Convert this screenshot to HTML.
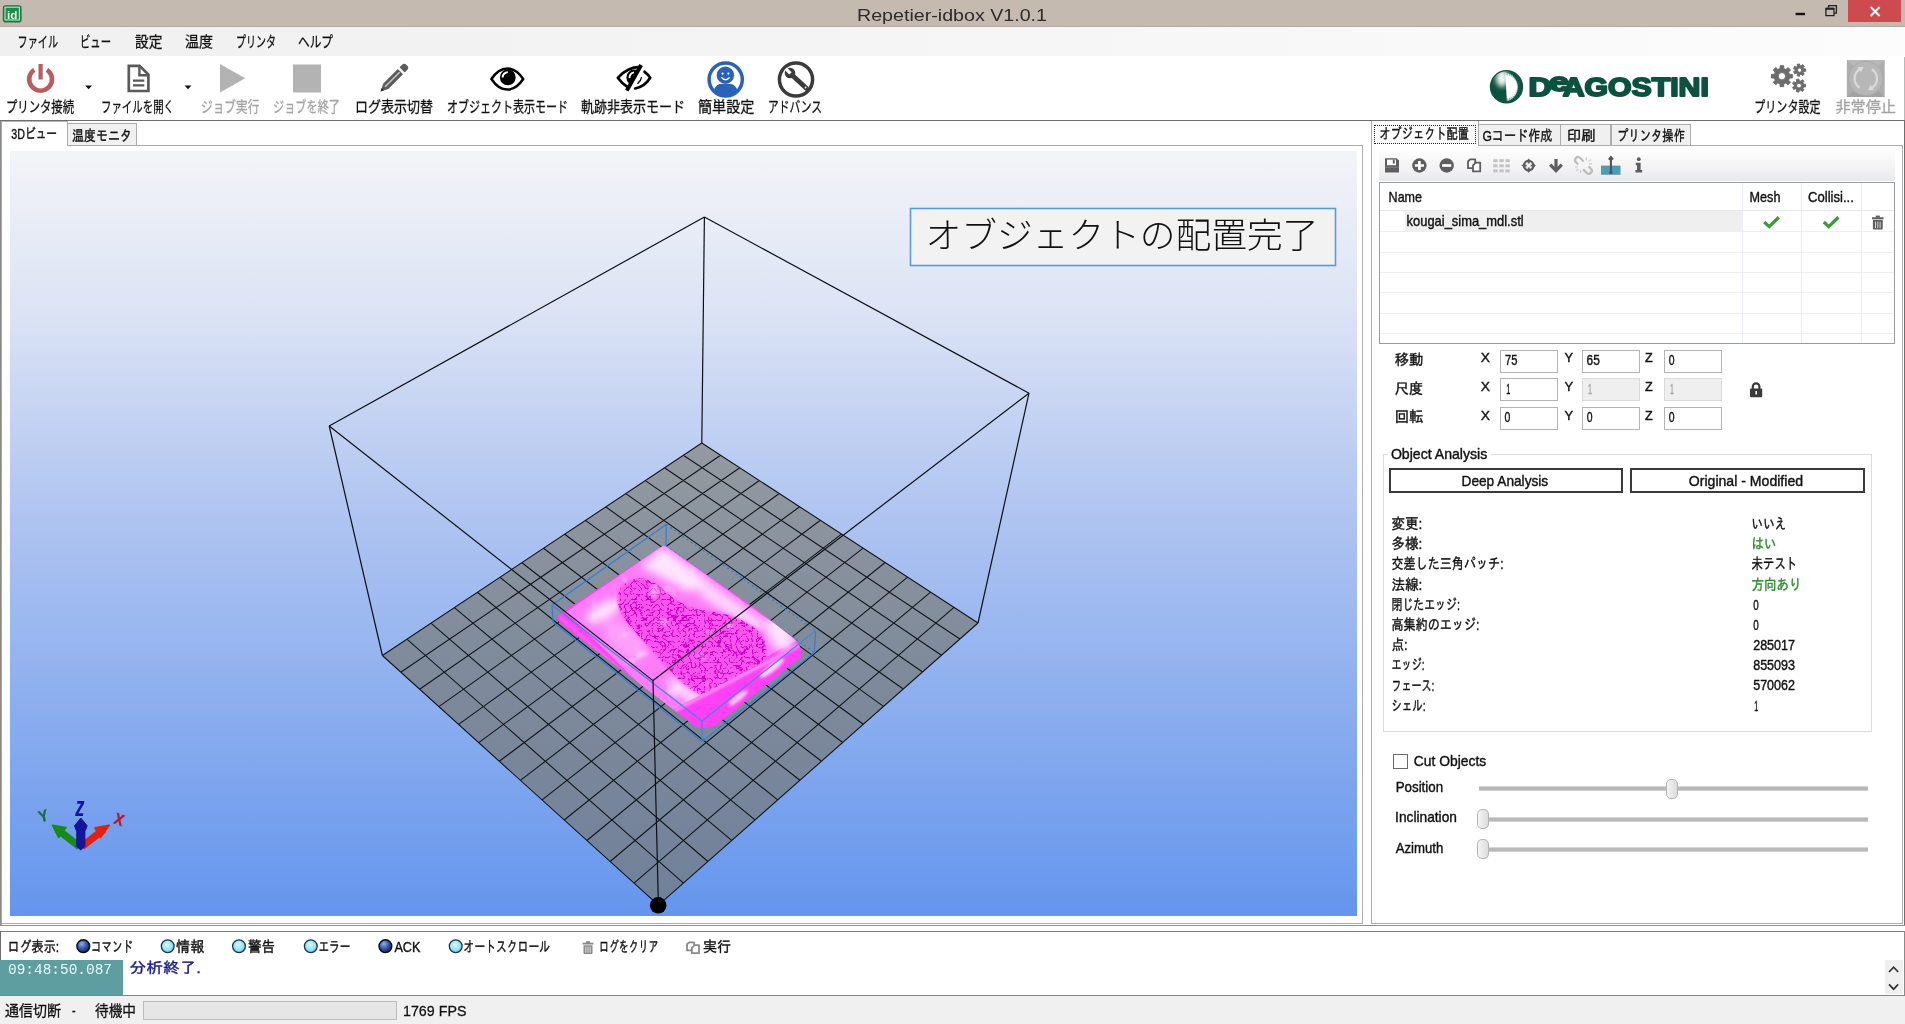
<!DOCTYPE html>
<html lang="ja"><head><meta charset="utf-8"><title>Repetier-idbox V1.0.1</title>
<style>
html,body{margin:0;padding:0;background:#fff;}
body{width:1905px;height:1024px;overflow:hidden;font-family:"Liberation Sans","IPAGothic","Noto Sans CJK JP",sans-serif;}
#app{position:relative;width:1905px;height:1024px;overflow:hidden;background:#fff;}
#app div{position:absolute;box-sizing:border-box;}
#ov{position:absolute;left:0;top:0;}
#titlebar{left:0;top:0;width:1905px;height:27px;background:#c5bab0;}
#closebtn{left:1848px;top:0;width:53px;height:22px;background:#cd4b4f;}
#menubar{left:0;top:27px;width:1905px;height:29px;background:linear-gradient(to right,#f0f0f0 0%,#f4f4f4 40%,#fcfcfc 100%);}
#toolbar{left:0;top:56px;width:1905px;height:64px;background:#fff;}
.hl{height:1px;}
.vl{width:1px;}
#view3d{left:10px;top:151px;width:1347px;height:765px;background:linear-gradient(to bottom,#f3f4f8 0%,#dde4f5 20%,#b3c7f1 45%,#6495ed 100%);}
.tab{background:#f0f0f0;border:1px solid #acacac;}
.tabsel{background:#fff;border:1px solid #acacac;border-bottom:none;}
.inp{width:58px;height:23px;background:#fff;border:1px solid #b3b4b8;}
.inp.dis{background:#efefef;border-color:#d9d9d9;}
.btn{height:25px;background:#fff;border:2px solid #3a3a3a;}
.track{height:5px;background:#b9b9b9;border-top:1px solid #d6d6d6;border-bottom:1px solid #d0d0d0;}
.thumb{width:12px;height:20px;border-radius:5px;background:linear-gradient(to right,#f4f4f4,#dcdcdc);border:1px solid #b4b4b4;}

</style></head>
<body>
<div id="app">
<div id="titlebar"></div>
<div id="closebtn"></div>
<div id="menubar"></div>
<div class="hl" style="left:0;top:26px;width:1905px;background:#b3aaa1;"></div>
<div id="toolbar"></div>
<div class="hl" style="left:0;top:120px;width:1905px;background:#6e6e6e;"></div>
<div class="vl" style="left:1904px;top:120px;height:806px;background:#6e6e6e;"></div>
<div class="vl" style="left:1904px;top:57px;height:63px;background:#b8b8b8;"></div>
<!-- left tab control -->
<div class="vl" style="left:0;top:121px;height:804px;background:#8a8a8a;"></div>
<div class="vl" style="left:1px;top:121px;height:804px;background:#a8a8a8;"></div>
<div class="hl" style="left:67px;top:145px;width:1296px;background:#acacac;"></div>
<div class="vl" style="left:1362px;top:145px;height:779px;background:#acacac;"></div>
<div class="hl" style="left:1px;top:923px;width:1362px;background:#acacac;"></div>
<div class="tabsel" style="left:2px;top:121px;width:66px;height:25px;border-left:none;border-top:none;"></div>
<div class="tab" style="left:67px;top:123px;width:70px;height:23px;"></div>
<div class="hl" style="left:2px;top:121px;width:65px;background:#b4b4b4;"></div>
<div id="view3d"></div>
<!-- right tab control -->
<div class="vl" style="left:1371px;top:121px;height:803px;background:#acacac;"></div>
<div class="hl" style="left:1478px;top:145px;width:425px;background:#acacac;"></div>
<div class="vl" style="left:1902px;top:145px;height:779px;background:#acacac;"></div>
<div class="hl" style="left:1371px;top:923px;width:532px;background:#acacac;"></div>
<div class="tabsel" style="left:1371px;top:121px;width:108px;height:25px;border-top:none;"></div>
<div class="tab" style="left:1478px;top:124px;width:83px;height:22px;"></div>
<div class="tab" style="left:1560px;top:124px;width:51px;height:22px;"></div>
<div class="tab" style="left:1611px;top:124px;width:80px;height:22px;"></div>
<div style="left:1374px;top:125px;width:102px;height:19px;border:1px dotted #222;"></div>
<!-- object toolbar -->
<div style="left:1379px;top:149px;width:516px;height:32px;background:linear-gradient(to bottom,#ffffff 0%,#f8f8f8 30%,#f1f1f2 70%,#e7e8ec 100%);"></div>
<!-- list view -->
<div style="left:1379px;top:182px;width:516px;height:162px;background:#fff;border:1px solid #9a9da2;"></div>
<div style="left:1405px;top:211px;width:337px;height:20px;background:#efefef;"></div>
<div class="hl" style="left:1380px;top:210px;width:514px;background:#e8e8e8;"></div>
<div class="hl" style="left:1380px;top:231px;width:514px;background:#efefef;"></div>
<div class="hl" style="left:1380px;top:252px;width:514px;background:#efefef;"></div>
<div class="hl" style="left:1380px;top:272px;width:514px;background:#efefef;"></div>
<div class="hl" style="left:1380px;top:292px;width:514px;background:#efefef;"></div>
<div class="hl" style="left:1380px;top:313px;width:514px;background:#efefef;"></div>
<div class="hl" style="left:1380px;top:333px;width:514px;background:#efefef;"></div>
<div class="vl" style="left:1742px;top:183px;height:160px;background:#e9edf2;"></div>
<div class="vl" style="left:1801px;top:183px;height:160px;background:#e9edf2;"></div>
<div class="vl" style="left:1861px;top:183px;height:160px;background:#e9edf2;"></div>
<!-- inputs -->
<div class="inp" style="left:1500px;top:350px;"></div>
<div class="inp" style="left:1582px;top:350px;"></div>
<div class="inp" style="left:1664px;top:350px;"></div>
<div class="inp" style="left:1500px;top:378px;"></div>
<div class="inp dis" style="left:1582px;top:378px;"></div>
<div class="inp dis" style="left:1664px;top:378px;"></div>
<div class="inp" style="left:1500px;top:407px;"></div>
<div class="inp" style="left:1582px;top:407px;"></div>
<div class="inp" style="left:1664px;top:407px;"></div>
<!-- group box -->
<div style="left:1383px;top:454px;width:489px;height:278px;border:1px solid #dcdcdc;"></div>
<div style="left:1388px;top:446px;width:103px;height:18px;background:#fff;"></div>
<div class="btn" style="left:1389px;top:468px;width:234px;"></div>
<div class="btn" style="left:1630px;top:468px;width:235px;"></div>
<!-- cut objects -->
<div style="left:1393px;top:754px;width:15px;height:15px;border:1px solid #6a6a6a;background:#fff;"></div>
<div class="track" style="left:1479px;top:786px;width:389px;"></div>
<div class="track" style="left:1479px;top:817px;width:389px;"></div>
<div class="track" style="left:1479px;top:847px;width:389px;"></div>
<div class="thumb" style="left:1666px;top:779px;"></div>
<div class="thumb" style="left:1477px;top:809px;"></div>
<div class="thumb" style="left:1477px;top:839px;"></div>
<!-- splitter + log -->
<div class="hl" style="left:0;top:925px;width:1905px;background:#8e8e8e;"></div>
<div class="hl" style="left:0;top:931px;width:1905px;background:#7c7c7c;"></div>
<div class="vl" style="left:0;top:931px;height:65px;background:#6e6e6e;"></div>
<div class="vl" style="left:1904px;top:931px;height:65px;background:#8a8a8a;"></div>
<div style="left:0;top:960px;width:123px;height:36px;background:#5f9ea0;"></div>
<div style="left:1885px;top:960px;width:18px;height:34px;background:#f0f0f0;"></div>
<div class="hl" style="left:0;top:995px;width:1905px;background:#858585;"></div>
<div style="left:0;top:996px;width:1905px;height:28px;background:#f0f0f0;"></div>
<div style="left:143px;top:1001px;width:254px;height:19px;background:#e6e6e6;border:1px solid #bcbcbc;"></div>

<svg id="ov" width="1905" height="1024" viewBox="0 0 1905 1024">
<defs>
<linearGradient id="pinkg" x1="0" y1="0" x2="1" y2="1"><stop offset="0" stop-color="#ffb8fb"/><stop offset="0.35" stop-color="#ff70f8"/><stop offset="0.7" stop-color="#f33cf0"/><stop offset="1" stop-color="#ff5cf8"/></linearGradient>
<filter id="tex" x="0" y="0" width="1" height="1"><feTurbulence type="turbulence" baseFrequency="0.19" numOctaves="2" seed="11" result="n"/><feColorMatrix in="n" type="matrix" values="0 0 0 0 0.60  0 0 0 0 0.0  0 0 0 0 0.54  -9 0 0 0 1.75"/><feComposite in2="SourceGraphic" operator="in"/></filter><filter id="tex2" x="0" y="0" width="1" height="1"><feTurbulence type="fractalNoise" baseFrequency="0.06" numOctaves="2" seed="5" result="n"/><feColorMatrix in="n" type="matrix" values="0 0 0 0 1  0 0 0 0 0.9  0 0 0 0 1  0 6 0 0 -3.9"/><feGaussianBlur stdDeviation="1.2"/><feComposite in2="SourceGraphic" operator="in"/></filter>
<filter id="blur2"><feGaussianBlur stdDeviation="4"/></filter>
<filter id="blur1"><feGaussianBlur stdDeviation="1.6"/></filter>
<clipPath id="objclip"><path d="M664,545 L752,606 L793,638 Q803,646 801,657 L716,725 Q704,731 695,726 L560,623 Q555,617 561,613 Z"/></clipPath>
</defs>
<g id="scene">
<linearGradient id="floorg" gradientUnits="userSpaceOnUse" x1="0" y1="443" x2="0" y2="905"><stop offset="0" stop-color="#939aa1"/><stop offset="0.45" stop-color="#808b9b"/><stop offset="1" stop-color="#71819a"/></linearGradient>
<polygon points="382.4,655.5 701.8,443.0 978.0,623.0 658.4,905.2" fill="url(#floorg)"/>
<path d="M382.4,655.5L658.4,905.2M406.9,639.2L683.5,883.1M430.9,623.2L707.9,861.5M454.4,607.6L731.7,840.4M477.4,592.3L755.0,819.9M499.9,577.3L777.7,799.9M522.0,562.7L799.9,780.3M543.6,548.3L821.5,761.2M564.7,534.2L842.7,742.5M585.5,520.4L863.3,724.3M605.8,506.9L883.5,706.4M625.8,493.6L903.3,689.0M645.3,480.6L922.6,672.0M664.5,467.8L941.4,655.3M683.3,455.3L959.9,639.0M701.8,443.0L978.0,623.0M382.4,655.5L701.8,443.0M400.8,672.2L720.6,455.3M419.6,689.2L739.8,467.8M438.9,706.6L759.4,480.5M458.6,724.4L779.3,493.5M478.7,742.6L799.6,506.8M499.3,761.3L820.4,520.3M520.4,780.4L841.5,534.1M542.1,799.9L863.1,548.1M564.2,820.0L885.2,562.5M586.9,840.5L907.6,577.1M610.1,861.5L930.6,592.1M634.0,883.1L954.0,607.4M658.4,905.2L978.0,623.0" stroke="#10161a" stroke-width="1.1" fill="none"/>
<g stroke="#0c1016" stroke-width="1.2" fill="none">
<line x1="704.4" y1="217.0" x2="701.8" y2="443.0" />
<line x1="329.2" y1="426.0" x2="382.4" y2="655.5" />
<line x1="1029.0" y1="393.2" x2="978.0" y2="623.0" />
<line x1="704.4" y1="217.0" x2="329.2" y2="426.0" />
<line x1="704.4" y1="217.0" x2="1029.0" y2="393.2" />
</g>
<g stroke="#2f7fd6" stroke-width="1.2" fill="none">
<line x1="666.2" y1="524.4" x2="815.6" y2="630.6" stroke-dasharray="2 3"/>
<line x1="666.0" y1="546.0" x2="814.4" y2="652.6" stroke-dasharray="2 3"/>
<line x1="666.0" y1="546.0" x2="553.0" y2="622.0" stroke-dasharray="2 3"/>
<line x1="666.2" y1="524.4" x2="666.0" y2="546.0" />
<line x1="552.0" y1="605.0" x2="666.2" y2="524.4" />
<line x1="552.0" y1="605.0" x2="553.0" y2="622.0" />
<line x1="815.6" y1="630.6" x2="814.4" y2="652.6" />
<line x1="553.0" y1="622.0" x2="702.0" y2="741.6" />
<line x1="702.0" y1="741.6" x2="814.4" y2="652.6" />
</g>
<g clip-path="url(#objclip)">
<rect x="550" y="540" width="260" height="195" fill="#ff44f4"/>
<path d="M664,545 L797,640 L668,712 L566,612 Z" fill="#ff7cf8"/>
<g filter="url(#blur2)">
<path d="M664,548 L712,584 L690,592 L640,566 Z" fill="#ffe4fe"/>
<path d="M700,576 L770,626 L752,630 L700,596 Z" fill="#ffd4fd"/>
<ellipse cx="604" cy="611" rx="20" ry="8" transform="rotate(-30 604 611)" fill="#ffe0fd"/>
<ellipse cx="780" cy="634" rx="12" ry="18" transform="rotate(-30 780 634)" fill="#ffe2fe"/>
<ellipse cx="688" cy="694" rx="26" ry="7" transform="rotate(38 688 694)" fill="#ffd0fc"/>
<ellipse cx="625" cy="640" rx="14" ry="26" transform="rotate(-48 625 640)" fill="#ff9ffa"/>
</g>
<g filter="url(#blur1)"><path d="M622,586 Q640,570 662,588 Q676,604 700,610 Q730,612 752,626 Q776,644 760,672 Q744,696 712,698 Q690,694 668,668 Q646,644 630,626 Q610,602 622,586 Z" fill="#f656ee"/></g>
<path filter="url(#tex)" d="M622,586 Q640,570 662,588 Q676,604 700,610 Q730,612 752,626 Q776,644 760,672 Q744,696 712,698 Q690,694 668,668 Q646,644 630,626 Q610,602 622,586 Z" fill="#c400b4"/>
<path filter="url(#tex2)" d="M566,612 L664,545 L797,640 L668,712Z" fill="#ffffff" opacity="0.45"/>
<path d="M557,615 L668,712 L699,730 L690,728 L556,624 Z" fill="#ff38f3"/>
<path d="M668,712 L801,643 L803,657 L712,729 L694,729 Z" fill="#ff40f4"/>
<g filter="url(#blur1)"><ellipse cx="772" cy="668" rx="15" ry="3.6" transform="rotate(-38 772 668)" fill="#ffd0fc"/><ellipse cx="738" cy="698" rx="12" ry="3.2" transform="rotate(-38 738 698)" fill="#ffc4fb"/><ellipse cx="610" cy="668" rx="16" ry="3" transform="rotate(40 610 668)" fill="#ff8cf8"/></g>
<path d="M670,713 L800,645" stroke="#ffc0fb" stroke-width="3" opacity="0.75" fill="none" filter="url(#blur1)"/>
<path d="M559,617 L668,712" stroke="#ff9cf9" stroke-width="2" opacity="0.6" fill="none" filter="url(#blur1)"/>
</g>
<g stroke="#3b88dc" stroke-width="1.2" fill="none">
<line x1="552.0" y1="605.0" x2="702.0" y2="721.0" />
<line x1="702.0" y1="721.0" x2="815.6" y2="630.6" />
<line x1="702.0" y1="721.0" x2="702.0" y2="741.6" />
</g>
<g stroke="#0c1016" stroke-width="1.2" fill="none">
<line x1="329.2" y1="426.0" x2="653.0" y2="680.6" />
<line x1="1029.0" y1="393.2" x2="653.0" y2="680.6" />
<line x1="653.0" y1="680.6" x2="658.4" y2="905.2" />
</g>
<circle cx="658.2" cy="905.3" r="8.3" fill="#000"/>
<g id="gizmo">
<path d="M79.6,846.6 L57.6,829.6" stroke="#178a17" stroke-width="7.4" fill="none"/>
<path d="M52.4,825.2 L66,827.6 L58.6,837.4 Z" fill="#178a17" stroke="#178a17" stroke-width="1.6" stroke-linejoin="round"/>
<path d="M81.8,846.6 L103.6,829.6" stroke="#e3220e" stroke-width="7.4" fill="none"/>
<path d="M109.2,825.2 L95,827.8 L100.4,837.6 Z" fill="#e3220e" stroke="#e3220e" stroke-width="1.6" stroke-linejoin="round"/>
<path d="M76.2,830 H85.4 V846.4 L80.7,850.4 L76.2,846.4Z" fill="#15159a"/>
<path d="M80.8,818 L87.2,825.8 L85.4,830.4 H76.2 L74.5,825.8 Z" fill="#15159a" stroke="#15159a" stroke-width="1" stroke-linejoin="round"/>
</g>
<rect x="910.5" y="208.5" width="425" height="57" fill="#f2f2f2" stroke="#5b9bd5" stroke-width="1.6"/>
</g>
<defs>
<radialGradient id="rOn" cx="0.38" cy="0.32" r="0.75"><stop offset="0" stop-color="#8fb0ea"/><stop offset="0.45" stop-color="#3c5fb4"/><stop offset="1" stop-color="#0c1a4c"/></radialGradient>
<radialGradient id="rOff" cx="0.45" cy="0.4" r="0.7"><stop offset="0" stop-color="#d8fbff"/><stop offset="0.6" stop-color="#8fe0fa"/><stop offset="1" stop-color="#5fb4dc"/></radialGradient>
<radialGradient id="sun" gradientUnits="userSpaceOnUse" cx="1505" cy="86.8" r="15.4"><stop offset="0" stop-color="#ffffff"/><stop offset="0.72" stop-color="#ffffff"/><stop offset="0.9" stop-color="#b9d8cc"/><stop offset="1" stop-color="#3a8069"/></radialGradient><filter id="lblur" x="-1" y="-1" width="3" height="3"><feGaussianBlur stdDeviation="2.6"/></filter>
<clipPath id="logoc"><circle cx="1506.5" cy="86.8" r="15.6"/></clipPath>
</defs>
<g id="icons">
<rect x="2.8" y="5.2" width="18.8" height="17.4" rx="2.8" fill="#1b7444"/>
<rect x="5" y="7.2" width="14.4" height="12.8" fill="#1f8a4c" stroke="#b8f0cc" stroke-width="1.1"/>
<rect x="1795.6" y="12.8" width="9.4" height="2.4" fill="#111"/>
<path d="M1828.6,7.6 V5.6 H1836.4 V13.2 H1834.4 M1825.9,8.4 H1834 V15.6 H1825.9Z" fill="none" stroke="#222" stroke-width="1.3"/><path d="M1825.9,8.8 H1834" stroke="#222" stroke-width="2"/>
<path d="M1870.6,7 L1879.6,16 M1879.6,7 L1870.6,16" stroke="#fff" stroke-width="2" fill="none"/>
<path d="M46.97,69.85 A11.4,11.4 0 1,1 34.23,69.85" fill="none" stroke="#b85c5e" stroke-width="4.6"/>
<line x1="40.6" y1="64" x2="40.6" y2="79.5" stroke="#b85c5e" stroke-width="4.2"/>
<path d="M85.2,85.6 H92 L88.6,89.2Z" fill="#111"/>
<path d="M184.6,85.6 H191.4 L188,89.2Z" fill="#111"/>
<path d="M128.8,65.9 H139.6 L148.4,74.6 V91 H128.8Z" fill="#fff" stroke="#5a5a5a" stroke-width="2.7" stroke-linejoin="miter"/>
<path d="M139.4,66 V75.2 H148.4" fill="none" stroke="#5a5a5a" stroke-width="2.4"/>
<path d="M133,80.6 H144.3 M133,85.4 H144.3" stroke="#5a5a5a" stroke-width="2.2" fill="none"/>
<path d="M220,64 L245.2,78.3 L220,92.6Z" fill="#b3b3b3"/>
<rect x="293" y="64.5" width="28" height="28" fill="#b3b3b3"/>
<g transform="translate(380.6,91.4) rotate(-45)" fill="#5c5c5c">
<path d="M0,0 L7.2,-3.7 H28 V3.7 H7.2Z"/>
<path d="M30.4,-3.7 H33.8 Q37,-3.7 37,-0.8 V0.8 Q37,3.7 33.8,3.7 H30.4Z"/>
<path d="M0,0 L3.2,-1.6 V1.6Z" fill="#2e2e2e"/>
<path d="M6.4,-0.9 H27 V0.7 H6.4Z" fill="#c4c4c4"/>
</g>
<path d="M491.4,79 C497,70.4 502,68.4 507.3,68.4 C512.6,68.4 517.6,70.4 523.2,79 C517.6,87.4 512.6,89.6 507.3,89.6 C502,89.6 497,87.4 491.4,79Z" fill="#fff" stroke="#000" stroke-width="2.5" stroke-linejoin="round"/>
<circle cx="507.8" cy="77.4" r="7.9" fill="#000"/>
<path d="M502.6,77.4 A5.2,5.2 0 0,1 507.8,72.2" stroke="#fff" stroke-width="2.1" fill="none"/>
<path d="M640.6,66.8 Q627.6,66.6 617.8,77.8 Q621.8,83.6 628,87.4" fill="none" stroke="#000" stroke-width="2.7" stroke-linejoin="round"/>
<clipPath id="esc"><polygon points="600,50 649.6,50 621.5,100 600,100"/></clipPath><circle cx="634.4" cy="77.4" r="8" fill="#000" clip-path="url(#esc)"/>
<path d="M629.6,78.2 A5,5 0 0,1 634,72.4" stroke="#fff" stroke-width="1.8" fill="none"/>
<path d="M641.2,65 L626.8,90.6" stroke="#000" stroke-width="3.9" fill="none"/>
<path d="M644.6,71.8 Q648.4,74.6 650.2,77.8 Q644.6,86.8 635.2,88.5" fill="none" stroke="#000" stroke-width="2.7" stroke-linecap="round"/>
<path d="M641.4,77.6 Q640.8,81 637.8,83.4" fill="none" stroke="#000" stroke-width="1.3" stroke-linecap="round"/>
<circle cx="725.7" cy="79.5" r="16.6" fill="#fff" stroke="#2a63b6" stroke-width="3.5"/>
<clipPath id="pc"><circle cx="725.7" cy="79.5" r="15.6"/></clipPath>
<g clip-path="url(#pc)" fill="#2a63b6"><circle cx="725.4" cy="75.2" r="8.7"/><path d="M712.6,99 Q712.6,86.2 719.5,84 H731.5 Q738.6,86.2 738.6,99Z"/></g>
<circle cx="722.6" cy="73.6" r="1.05" fill="#fff"/><circle cx="728.4" cy="73.6" r="1.05" fill="#fff"/>
<path d="M721.4,77.4 Q725.5,82 729.6,77.4" stroke="#fff" stroke-width="1.4" fill="none"/>
<circle cx="796" cy="79.5" r="16.6" fill="#fff" stroke="#3b3b3b" stroke-width="3.5"/>
<path d="M791.5,74.5 L806.6,88.4" stroke="#3b3b3b" stroke-width="4.8" stroke-linecap="round" fill="none"/>
<circle cx="790" cy="73" r="5.3" fill="#3b3b3b"/>
<path d="M790.4,73.4 L785.6,68.6" stroke="#fff" stroke-width="3.4" fill="none"/>
<circle cx="805.6" cy="87.5" r="0.9" fill="#fff"/>
<circle cx="1506.5" cy="86.8" r="16.7" fill="#0d5240"/>
<g clip-path="url(#logoc)">
<ellipse cx="1502" cy="78" rx="6" ry="9" fill="#ffffff" opacity="0.95" filter="url(#lblur)"/>
<path d="M1505.2,72.6 A14.6,14.6 0 0,1 1506.9,101.2 Z" fill="url(#sun)"/>
<path d="M1507.2,75.4L1507.6,71.7M1509.3,75.8L1510.3,72.2M1511.2,76.6L1512.9,73.3M1513.0,77.7L1515.3,74.7M1514.5,79.1L1517.3,76.6M1515.8,80.8L1519.0,78.9M1516.7,82.7L1520.2,81.4M1517.3,84.7L1520.9,84.0M1517.5,86.8L1521.2,86.8M1517.3,88.9L1520.9,89.6M1516.7,90.9L1520.2,92.2M1515.8,92.8L1519.0,94.7M1514.5,94.5L1517.3,97.0M1513.0,95.9L1515.3,98.9M1511.2,97.0L1512.9,100.3M1509.3,97.8L1510.3,101.4M1507.2,98.2L1507.6,101.9" stroke="#2f7a66" stroke-width="0.9" opacity="0.55" fill="none"/>
</g>
<path d="M1792.34,74.38 L1792.34,78.02 L1789.48,78.02 L1788.55,80.28 L1790.57,82.30 L1788.00,84.87 L1785.98,82.85 L1783.72,83.78 L1783.72,86.64 L1780.08,86.64 L1780.08,83.78 L1777.82,82.85 L1775.80,84.87 L1773.23,82.30 L1775.25,80.28 L1774.32,78.02 L1771.46,78.02 L1771.46,74.38 L1774.32,74.38 L1775.25,72.12 L1773.23,70.10 L1775.80,67.53 L1777.82,69.55 L1780.08,68.62 L1780.08,65.76 L1783.72,65.76 L1783.72,68.62 L1785.98,69.55 L1788.00,67.53 L1790.57,70.10 L1788.55,72.12 L1789.48,74.38Z M1778.20,76.20 a3.70,3.70 0 1,0 7.40,0 a3.70,3.70 0 1,0 -7.40,0Z" fill="#6c6c6c" fill-rule="evenodd" stroke="#6c6c6c" stroke-width="1" stroke-linejoin="round"/>
<path d="M1805.68,68.88 L1805.68,71.32 L1803.94,71.30 L1803.24,72.75 L1804.34,74.09 L1802.44,75.61 L1801.37,74.24 L1799.80,74.60 L1799.43,76.30 L1797.06,75.76 L1797.47,74.06 L1796.21,73.06 L1794.65,73.83 L1793.59,71.64 L1795.17,70.90 L1795.17,69.30 L1793.59,68.56 L1794.65,66.37 L1796.21,67.14 L1797.47,66.14 L1797.06,64.44 L1799.43,63.90 L1799.80,65.60 L1801.37,65.96 L1802.44,64.59 L1804.34,66.11 L1803.24,67.45 L1803.94,68.90Z M1797.40,70.10 a2.20,2.20 0 1,0 4.40,0 a2.20,2.20 0 1,0 -4.40,0Z" fill="#6c6c6c" fill-rule="evenodd" stroke="#6c6c6c" stroke-width="1" stroke-linejoin="round"/>
<path d="M1805.47,84.31 L1805.47,86.89 L1803.63,86.88 L1802.88,88.42 L1804.05,89.85 L1802.02,91.47 L1800.89,90.01 L1799.22,90.40 L1798.82,92.20 L1796.30,91.62 L1796.73,89.83 L1795.39,88.76 L1793.73,89.57 L1792.61,87.24 L1794.28,86.46 L1794.28,84.74 L1792.61,83.96 L1793.73,81.63 L1795.39,82.44 L1796.73,81.37 L1796.30,79.58 L1798.82,79.00 L1799.22,80.80 L1800.89,81.19 L1802.02,79.73 L1804.05,81.35 L1802.88,82.78 L1803.63,84.32Z M1796.60,85.60 a2.40,2.40 0 1,0 4.80,0 a2.40,2.40 0 1,0 -4.80,0Z" fill="#6c6c6c" fill-rule="evenodd" stroke="#6c6c6c" stroke-width="1" stroke-linejoin="round"/>
<rect x="1846.8" y="60" width="37.9" height="37" fill="#adadad"/>
<path d="M1846.8,60 H1884.7 L1876,68 H1855.5Z" fill="#b9b9b9"/><path d="M1846.8,97 H1884.7 L1876,89 H1855.5Z" fill="#a2a2a2"/>
<circle cx="1865.8" cy="78.5" r="17.2" fill="#b7b7b7" stroke="#a9a9a9" stroke-width="1"/>
<g transform="rotate(90 1865.8 78.5)">
<path d="M1856.6,72.4 A11,11 0 0,1 1875.6,73.2" fill="none" stroke="#dadada" stroke-width="2.2"/><path d="M1877.6,70.2 L1877.2,76.4 L1872,73.6Z" fill="#dadada"/>
<path d="M1875,84.6 A11,11 0 0,1 1856,83.8" fill="none" stroke="#dadada" stroke-width="2.2"/><path d="M1854,86.8 L1854.4,80.6 L1859.6,83.4Z" fill="#dadada"/>
</g>
<path d="M1385,158.3 H1396.6 L1399,160.6 V172.4 H1385Z" fill="#5e5e5e"/>
<rect x="1387" y="159.6" width="9" height="5.6" fill="#fff"/><rect x="1392.8" y="159.6" width="1.9" height="4" fill="#5e5e5e"/>
<path d="M1385,167.2 H1399" stroke="#8a8a8a" stroke-width="0.8"/>
<circle cx="1419.4" cy="165.5" r="7.2" fill="#5e5e5e"/><path d="M1414.8,165.5 H1424 M1419.4,160.9 V170.1" stroke="#fff" stroke-width="2.7"/>
<circle cx="1446.7" cy="165.5" r="7.2" fill="#5e5e5e"/><path d="M1442.1,165.5 H1451.3" stroke="#fff" stroke-width="2.7"/>
<g fill="#fff" stroke="#5e5e5e" stroke-width="1.8" stroke-linejoin="round"><path d="M1468.0,161.5 L1470.1,159.4 H1475.2 V168.2 H1468.0Z"/><path d="M1473.0,165.4 L1475.8,162.6 H1480.2 V171.4 H1473.0Z"/></g>
<rect x="1493.2" y="159.2" width="4.4" height="3" fill="#c2c2c2"/>
<rect x="1499.3" y="159.2" width="4.4" height="3" fill="#c2c2c2"/>
<rect x="1505.4" y="159.2" width="4.4" height="3" fill="#c2c2c2"/>
<rect x="1493.2" y="164.3" width="4.4" height="3" fill="#c2c2c2"/>
<rect x="1499.3" y="164.3" width="4.4" height="3" fill="#c2c2c2"/>
<rect x="1505.4" y="164.3" width="4.4" height="3" fill="#c2c2c2"/>
<rect x="1493.2" y="169.4" width="4.4" height="3" fill="#c2c2c2"/>
<rect x="1499.3" y="169.4" width="4.4" height="3" fill="#c2c2c2"/>
<rect x="1505.4" y="169.4" width="4.4" height="3" fill="#c2c2c2"/>
<circle cx="1528.7" cy="165.6" r="4.7" fill="none" stroke="#5e5e5e" stroke-width="2.3"/>
<path d="M1528.7,158.4 L1531.6,162 H1525.8Z M1528.7,172.8 L1531.6,169.2 H1525.8Z M1521.5,165.6 L1525.1,162.7 V168.5Z M1535.9,165.6 L1532.3,162.7 V168.5Z" fill="#5e5e5e"/>
<path d="M1528.7,160 V163.6 M1528.7,167.6 V171.2 M1523.1,165.6 H1526.7 M1530.7,165.6 H1534.3" stroke="#5e5e5e" stroke-width="1.9"/>
<path d="M1556,159 V169.6" fill="none" stroke="#5e5e5e" stroke-width="3.2"/><path d="M1550.2,164.6 L1556,170.6 L1561.8,164.6" fill="none" stroke="#5e5e5e" stroke-width="3.2"/>
<g fill="none" stroke="#bdbdbd" stroke-width="2.2" transform="translate(1583.4,165.4) rotate(45)"><path d="M-2.6,-3 H-7.4 Q-10.6,-3 -10.6,0 Q-10.6,3 -7.4,3 H-4.4"/><path d="M2.6,3 H7.4 Q10.6,3 10.6,0 Q10.6,-3 7.4,-3 H4.4"/></g>
<path d="M1586.6,157.4 L1586,160.4 M1590.8,159.6 L1588.4,161.6 M1592,163.6 L1589,163.8 M1580.2,173.2 L1580.8,170.2 M1576,171 L1578.4,169 M1574.8,167 L1577.8,166.8" fill="none" stroke="#cbcbcb" stroke-width="1.2"/>
<rect x="1601" y="165.6" width="19.5" height="9.2" fill="#4b9db3"/>
<path d="M1610.9,158.5 V172.6" stroke="#4f5558" stroke-width="2.1"/><path d="M1610.9,155.6 L1613.8,159 L1610.9,161 L1608,159Z" fill="#4f5558"/><circle cx="1610.9" cy="172.4" r="1.7" fill="#4f5558"/>
<circle cx="1638.8" cy="159.2" r="1.9" fill="#5e5e5e"/><path d="M1635.8,162.8 H1640.6 V170 H1642.2 V172.4 H1635.4 V170 H1637 V165.2 H1635.8Z" fill="#5e5e5e"/>
<path d="M1764.2,222.0 L1769.2,226.6 L1778.8,217.2" fill="none" stroke="#3d9a3a" stroke-width="3.3" stroke-linejoin="miter"/>
<path d="M1823.8,222.0 L1828.8,226.6 L1838.4,217.2" fill="none" stroke="#3d9a3a" stroke-width="3.3" stroke-linejoin="miter"/>
<g fill="#5c5c5c"><rect x="1875.7" y="215.6" width="4.2" height="2.0"/><rect x="1872.0" y="217.3" width="11.6" height="2.0"/><path d="M1872.9,220.1 H1882.7 V228.5 Q1882.7,229.6 1881.5,229.6 H1874.1 Q1872.9,229.6 1872.9,228.5Z"/></g><g stroke="#fff" stroke-width="1" opacity="0.75"><line x1="1875.5" y1="221.5" x2="1875.5" y2="228.2"/><line x1="1877.8" y1="221.5" x2="1877.8" y2="228.2"/><line x1="1880.1" y1="221.5" x2="1880.1" y2="228.2"/></g>
<path d="M1752.8,389 V386.6 A3.3,3.3 0 0,1 1759.4,386.6 V389" fill="none" stroke="#3a3a3a" stroke-width="2.2"/>
<rect x="1750" y="388.4" width="12.2" height="8.8" rx="1.2" fill="#3a3a3a"/><rect x="1755.4" y="391" width="1.6" height="3.4" fill="#fff"/>
<circle cx="83.3" cy="946.2" r="6.4" fill="url(#rOn)" stroke="#0a0a14" stroke-width="1.4"/>
<circle cx="167.7" cy="946.2" r="6.4" fill="url(#rOff)" stroke="#1c3a4a" stroke-width="1.3"/>
<circle cx="239" cy="946.2" r="6.4" fill="url(#rOff)" stroke="#1c3a4a" stroke-width="1.3"/>
<circle cx="310.8" cy="946.2" r="6.4" fill="url(#rOff)" stroke="#1c3a4a" stroke-width="1.3"/>
<circle cx="385.4" cy="946.2" r="6.4" fill="url(#rOn)" stroke="#0a0a14" stroke-width="1.4"/>
<circle cx="455.7" cy="946.2" r="6.4" fill="url(#rOff)" stroke="#1c3a4a" stroke-width="1.3"/>
<g fill="#8a8a8a"><rect x="586.1" y="941.2" width="3.9" height="1.8"/><rect x="582.6" y="942.7" width="10.8" height="1.8"/><path d="M583.5,945.3 H592.5 V953.0 Q592.5,954.0 591.5,954.0 H584.5 Q583.5,954.0 583.5,953.0Z"/></g><g stroke="#fff" stroke-width="1" opacity="0.75"><line x1="585.8" y1="946.6" x2="585.8" y2="952.7"/><line x1="588.0" y1="946.6" x2="588.0" y2="952.7"/><line x1="590.2" y1="946.6" x2="590.2" y2="952.7"/></g>
<g fill="#fff" stroke="#8a8a8a" stroke-width="1.8" stroke-linejoin="round"><path d="M687.0,944.2 L689.1,942.4 H694.1 V950.4 H687.0Z"/><path d="M691.9,947.8 L694.7,945.2 H699.0 V953.2 H691.9Z"/></g>
<path d="M1889,972 L1893.6,967.2 L1898.2,972 M1889,984.4 L1893.6,989.2 L1898.2,984.4" fill="none" stroke="#333" stroke-width="1.7"/>
</g>
<g id="texts">
<text x="857.0" y="20.8" font-size="17.4" font-family="&quot;Liberation Sans&quot;,&quot;Noto Sans CJK JP&quot;,sans-serif" fill="#2c2c2c" textLength="190.0" lengthAdjust="spacingAndGlyphs">Repetier-idbox V1.0.1</text>
<text x="7.0" y="18.8" font-size="11.5" font-family="&quot;Liberation Sans&quot;,&quot;Noto Sans CJK JP&quot;,sans-serif" fill="#d8ffe4" font-weight="700" textLength="10.4" lengthAdjust="spacingAndGlyphs">id</text>
<text x="17.6" y="46.6" font-size="15" font-family="&quot;Liberation Sans&quot;,&quot;Noto Sans CJK JP&quot;,sans-serif" fill="#111" textLength="40.4" lengthAdjust="spacingAndGlyphs" stroke="#111" stroke-width="0.28">ファイル</text>
<text x="80.0" y="46.6" font-size="15" font-family="&quot;Liberation Sans&quot;,&quot;Noto Sans CJK JP&quot;,sans-serif" fill="#111" textLength="31.0" lengthAdjust="spacingAndGlyphs" stroke="#111" stroke-width="0.28">ビュー</text>
<text x="135.0" y="46.6" font-size="15" font-family="&quot;Liberation Sans&quot;,&quot;Noto Sans CJK JP&quot;,sans-serif" fill="#111" textLength="27.4" lengthAdjust="spacingAndGlyphs" stroke="#111" stroke-width="0.28">設定</text>
<text x="185.0" y="46.6" font-size="15" font-family="&quot;Liberation Sans&quot;,&quot;Noto Sans CJK JP&quot;,sans-serif" fill="#111" textLength="28.0" lengthAdjust="spacingAndGlyphs" stroke="#111" stroke-width="0.28">温度</text>
<text x="236.0" y="46.6" font-size="15" font-family="&quot;Liberation Sans&quot;,&quot;Noto Sans CJK JP&quot;,sans-serif" fill="#111" textLength="40.0" lengthAdjust="spacingAndGlyphs" stroke="#111" stroke-width="0.28">プリンタ</text>
<text x="298.0" y="46.6" font-size="15" font-family="&quot;Liberation Sans&quot;,&quot;Noto Sans CJK JP&quot;,sans-serif" fill="#111" textLength="35.0" lengthAdjust="spacingAndGlyphs" stroke="#111" stroke-width="0.28">ヘルプ</text>
<text x="6.0" y="112.4" font-size="15" font-family="&quot;Liberation Sans&quot;,&quot;Noto Sans CJK JP&quot;,sans-serif" fill="#111" textLength="68.0" lengthAdjust="spacingAndGlyphs" stroke="#111" stroke-width="0.28">プリンタ接続</text>
<text x="101.0" y="112.4" font-size="15" font-family="&quot;Liberation Sans&quot;,&quot;Noto Sans CJK JP&quot;,sans-serif" fill="#111" textLength="73.0" lengthAdjust="spacingAndGlyphs" stroke="#111" stroke-width="0.28">ファイルを開く</text>
<text x="201.0" y="112.4" font-size="15" font-family="&quot;Liberation Sans&quot;,&quot;Noto Sans CJK JP&quot;,sans-serif" fill="#a3a3a3" textLength="58.4" lengthAdjust="spacingAndGlyphs" stroke="#a3a3a3" stroke-width="0.28">ジョブ実行</text>
<text x="273.0" y="112.4" font-size="15" font-family="&quot;Liberation Sans&quot;,&quot;Noto Sans CJK JP&quot;,sans-serif" fill="#a3a3a3" textLength="67.0" lengthAdjust="spacingAndGlyphs" stroke="#a3a3a3" stroke-width="0.28">ジョブを終了</text>
<text x="355.0" y="112.4" font-size="15" font-family="&quot;Liberation Sans&quot;,&quot;Noto Sans CJK JP&quot;,sans-serif" fill="#111" textLength="78.0" lengthAdjust="spacingAndGlyphs" stroke="#111" stroke-width="0.28">ログ表示切替</text>
<text x="447.0" y="112.4" font-size="15" font-family="&quot;Liberation Sans&quot;,&quot;Noto Sans CJK JP&quot;,sans-serif" fill="#111" textLength="121.0" lengthAdjust="spacingAndGlyphs" stroke="#111" stroke-width="0.28">オブジェクト表示モード</text>
<text x="581.0" y="112.4" font-size="15" font-family="&quot;Liberation Sans&quot;,&quot;Noto Sans CJK JP&quot;,sans-serif" fill="#111" textLength="104.0" lengthAdjust="spacingAndGlyphs" stroke="#111" stroke-width="0.28">軌跡非表示モード</text>
<text x="698.0" y="112.4" font-size="15" font-family="&quot;Liberation Sans&quot;,&quot;Noto Sans CJK JP&quot;,sans-serif" fill="#111" textLength="56.4" lengthAdjust="spacingAndGlyphs" stroke="#111" stroke-width="0.28">簡単設定</text>
<text x="768.0" y="112.4" font-size="15" font-family="&quot;Liberation Sans&quot;,&quot;Noto Sans CJK JP&quot;,sans-serif" fill="#111" textLength="54.0" lengthAdjust="spacingAndGlyphs" stroke="#111" stroke-width="0.28">アドバンス</text>
<text x="1754.3" y="112.4" font-size="15" font-family="&quot;Liberation Sans&quot;,&quot;Noto Sans CJK JP&quot;,sans-serif" fill="#111" textLength="66.2" lengthAdjust="spacingAndGlyphs" stroke="#111" stroke-width="0.28">プリンタ設定</text>
<text x="1835.4" y="112.4" font-size="15" font-family="&quot;Liberation Sans&quot;,&quot;Noto Sans CJK JP&quot;,sans-serif" fill="#a3a3a3" textLength="60.6" lengthAdjust="spacingAndGlyphs" stroke="#a3a3a3" stroke-width="0.28">非常停止</text>
<text x="1528.6" y="96.2" font-size="26" textLength="23" font-family="&quot;Liberation Sans&quot;,&quot;Noto Sans CJK JP&quot;,sans-serif" font-weight="700" fill="#0d5240" stroke="#0d5240" stroke-width="1.9" stroke-linejoin="round" lengthAdjust="spacingAndGlyphs">D</text>
<text x="1548.8" y="91" font-size="25.4" textLength="20.4" font-family="&quot;Liberation Sans&quot;,&quot;Noto Sans CJK JP&quot;,sans-serif" font-weight="700" fill="#0d5240" stroke="#0d5240" stroke-width="1.9" stroke-linejoin="round" lengthAdjust="spacingAndGlyphs">e</text>
<text x="1562.8" y="96.2" font-size="26" textLength="146" font-family="&quot;Liberation Sans&quot;,&quot;Noto Sans CJK JP&quot;,sans-serif" font-weight="700" fill="#0d5240" stroke="#0d5240" stroke-width="1.9" stroke-linejoin="round" lengthAdjust="spacingAndGlyphs">AGOSTINI</text>
<text x="11.3" y="138.6" font-size="15" font-family="&quot;Liberation Sans&quot;,&quot;IPAGothic&quot;,&quot;Noto Sans CJK JP&quot;,sans-serif" fill="#111" textLength="45.7" lengthAdjust="spacingAndGlyphs" stroke="#111" stroke-width="0.4">3Dビュー</text>
<text x="72.0" y="141.0" font-size="15" font-family="&quot;Liberation Sans&quot;,&quot;IPAGothic&quot;,&quot;Noto Sans CJK JP&quot;,sans-serif" fill="#111" textLength="60.0" lengthAdjust="spacingAndGlyphs" stroke="#111" stroke-width="0.4">温度モニタ</text>
<text x="1379.4" y="139.2" font-size="15" font-family="&quot;Liberation Sans&quot;,&quot;IPAGothic&quot;,&quot;Noto Sans CJK JP&quot;,sans-serif" fill="#111" textLength="89.6" lengthAdjust="spacingAndGlyphs" stroke="#111" stroke-width="0.4">オブジェクト配置</text>
<text x="1482.4" y="141.0" font-size="15" font-family="&quot;Liberation Sans&quot;,&quot;IPAGothic&quot;,&quot;Noto Sans CJK JP&quot;,sans-serif" fill="#111" textLength="70.0" lengthAdjust="spacingAndGlyphs" stroke="#111" stroke-width="0.4">Gコード作成</text>
<text x="1567.0" y="141.0" font-size="15" font-family="&quot;Liberation Sans&quot;,&quot;IPAGothic&quot;,&quot;Noto Sans CJK JP&quot;,sans-serif" fill="#111" textLength="28.6" lengthAdjust="spacingAndGlyphs" stroke="#111" stroke-width="0.4">印刷</text>
<text x="1617.0" y="141.0" font-size="15" font-family="&quot;Liberation Sans&quot;,&quot;IPAGothic&quot;,&quot;Noto Sans CJK JP&quot;,sans-serif" fill="#111" textLength="68.0" lengthAdjust="spacingAndGlyphs" stroke="#111" stroke-width="0.4">プリンタ操作</text>
<text x="1388.6" y="202.4" font-size="14.5" font-family="&quot;Liberation Sans&quot;,&quot;IPAGothic&quot;,&quot;Noto Sans CJK JP&quot;,sans-serif" fill="#111" textLength="33.4" lengthAdjust="spacingAndGlyphs" stroke="#111" stroke-width="0.4">Name</text>
<text x="1749.6" y="202.4" font-size="14.5" font-family="&quot;Liberation Sans&quot;,&quot;IPAGothic&quot;,&quot;Noto Sans CJK JP&quot;,sans-serif" fill="#111" textLength="30.8" lengthAdjust="spacingAndGlyphs" stroke="#111" stroke-width="0.4">Mesh</text>
<text x="1808.0" y="202.4" font-size="14.5" font-family="&quot;Liberation Sans&quot;,&quot;IPAGothic&quot;,&quot;Noto Sans CJK JP&quot;,sans-serif" fill="#111" textLength="45.8" lengthAdjust="spacingAndGlyphs" stroke="#111" stroke-width="0.4">Collisi...</text>
<text x="1406.6" y="226.0" font-size="14.5" font-family="&quot;Liberation Sans&quot;,&quot;IPAGothic&quot;,&quot;Noto Sans CJK JP&quot;,sans-serif" fill="#111" textLength="117.0" lengthAdjust="spacingAndGlyphs" stroke="#111" stroke-width="0.4">kougai_sima_mdl.stl</text>
<text x="1394.8" y="365.0" font-size="15" font-family="&quot;Liberation Sans&quot;,&quot;IPAGothic&quot;,&quot;Noto Sans CJK JP&quot;,sans-serif" fill="#111" textLength="28.6" lengthAdjust="spacingAndGlyphs" stroke="#111" stroke-width="0.4">移動</text>
<text x="1394.8" y="393.6" font-size="15" font-family="&quot;Liberation Sans&quot;,&quot;IPAGothic&quot;,&quot;Noto Sans CJK JP&quot;,sans-serif" fill="#111" textLength="28.6" lengthAdjust="spacingAndGlyphs" stroke="#111" stroke-width="0.4">尺度</text>
<text x="1394.8" y="422.4" font-size="15" font-family="&quot;Liberation Sans&quot;,&quot;IPAGothic&quot;,&quot;Noto Sans CJK JP&quot;,sans-serif" fill="#111" textLength="28.6" lengthAdjust="spacingAndGlyphs" stroke="#111" stroke-width="0.4">回転</text>
<text x="1480.8" y="362.4" font-size="13.2" font-family="&quot;Liberation Sans&quot;,&quot;IPAGothic&quot;,&quot;Noto Sans CJK JP&quot;,sans-serif" fill="#111" textLength="9.2" lengthAdjust="spacingAndGlyphs" stroke="#111" stroke-width="0.4">X</text>
<text x="1564.4" y="362.4" font-size="13.2" font-family="&quot;Liberation Sans&quot;,&quot;IPAGothic&quot;,&quot;Noto Sans CJK JP&quot;,sans-serif" fill="#111" textLength="8.6" lengthAdjust="spacingAndGlyphs" stroke="#111" stroke-width="0.4">Y</text>
<text x="1644.9" y="362.4" font-size="13.2" font-family="&quot;Liberation Sans&quot;,&quot;IPAGothic&quot;,&quot;Noto Sans CJK JP&quot;,sans-serif" fill="#111" textLength="7.7" lengthAdjust="spacingAndGlyphs" stroke="#111" stroke-width="0.4">Z</text>
<text x="1480.8" y="391.0" font-size="13.2" font-family="&quot;Liberation Sans&quot;,&quot;IPAGothic&quot;,&quot;Noto Sans CJK JP&quot;,sans-serif" fill="#111" textLength="9.2" lengthAdjust="spacingAndGlyphs" stroke="#111" stroke-width="0.4">X</text>
<text x="1564.4" y="391.0" font-size="13.2" font-family="&quot;Liberation Sans&quot;,&quot;IPAGothic&quot;,&quot;Noto Sans CJK JP&quot;,sans-serif" fill="#111" textLength="8.6" lengthAdjust="spacingAndGlyphs" stroke="#111" stroke-width="0.4">Y</text>
<text x="1644.9" y="391.0" font-size="13.2" font-family="&quot;Liberation Sans&quot;,&quot;IPAGothic&quot;,&quot;Noto Sans CJK JP&quot;,sans-serif" fill="#111" textLength="7.7" lengthAdjust="spacingAndGlyphs" stroke="#111" stroke-width="0.4">Z</text>
<text x="1480.8" y="419.8" font-size="13.2" font-family="&quot;Liberation Sans&quot;,&quot;IPAGothic&quot;,&quot;Noto Sans CJK JP&quot;,sans-serif" fill="#111" textLength="9.2" lengthAdjust="spacingAndGlyphs" stroke="#111" stroke-width="0.4">X</text>
<text x="1564.4" y="419.8" font-size="13.2" font-family="&quot;Liberation Sans&quot;,&quot;IPAGothic&quot;,&quot;Noto Sans CJK JP&quot;,sans-serif" fill="#111" textLength="8.6" lengthAdjust="spacingAndGlyphs" stroke="#111" stroke-width="0.4">Y</text>
<text x="1644.9" y="419.8" font-size="13.2" font-family="&quot;Liberation Sans&quot;,&quot;IPAGothic&quot;,&quot;Noto Sans CJK JP&quot;,sans-serif" fill="#111" textLength="7.7" lengthAdjust="spacingAndGlyphs" stroke="#111" stroke-width="0.4">Z</text>
<text x="1505.0" y="365.2" font-size="14" font-family="&quot;Liberation Sans&quot;,&quot;IPAGothic&quot;,&quot;Noto Sans CJK JP&quot;,sans-serif" fill="#111" textLength="12.4" lengthAdjust="spacingAndGlyphs" stroke="#111" stroke-width="0.4">75</text>
<text x="1586.6" y="365.2" font-size="14" font-family="&quot;Liberation Sans&quot;,&quot;IPAGothic&quot;,&quot;Noto Sans CJK JP&quot;,sans-serif" fill="#111" textLength="13.2" lengthAdjust="spacingAndGlyphs" stroke="#111" stroke-width="0.4">65</text>
<text x="1668.8" y="365.2" font-size="14" font-family="&quot;Liberation Sans&quot;,&quot;IPAGothic&quot;,&quot;Noto Sans CJK JP&quot;,sans-serif" fill="#111" textLength="5.8" lengthAdjust="spacingAndGlyphs" stroke="#111" stroke-width="0.4">0</text>
<text x="1506.2" y="393.8" font-size="14" font-family="&quot;Liberation Sans&quot;,&quot;IPAGothic&quot;,&quot;Noto Sans CJK JP&quot;,sans-serif" fill="#111" textLength="4.0" lengthAdjust="spacingAndGlyphs" stroke="#111" stroke-width="0.4">1</text>
<text x="1588.0" y="393.8" font-size="14" font-family="&quot;Liberation Sans&quot;,&quot;IPAGothic&quot;,&quot;Noto Sans CJK JP&quot;,sans-serif" fill="#a6a6a6" textLength="4.0" lengthAdjust="spacingAndGlyphs" stroke="#a6a6a6" stroke-width="0.4">1</text>
<text x="1670.0" y="393.8" font-size="14" font-family="&quot;Liberation Sans&quot;,&quot;IPAGothic&quot;,&quot;Noto Sans CJK JP&quot;,sans-serif" fill="#a6a6a6" textLength="4.0" lengthAdjust="spacingAndGlyphs" stroke="#a6a6a6" stroke-width="0.4">1</text>
<text x="1504.6" y="422.4" font-size="14" font-family="&quot;Liberation Sans&quot;,&quot;IPAGothic&quot;,&quot;Noto Sans CJK JP&quot;,sans-serif" fill="#111" textLength="5.8" lengthAdjust="spacingAndGlyphs" stroke="#111" stroke-width="0.4">0</text>
<text x="1586.8" y="422.4" font-size="14" font-family="&quot;Liberation Sans&quot;,&quot;IPAGothic&quot;,&quot;Noto Sans CJK JP&quot;,sans-serif" fill="#111" textLength="5.8" lengthAdjust="spacingAndGlyphs" stroke="#111" stroke-width="0.4">0</text>
<text x="1668.8" y="422.4" font-size="14" font-family="&quot;Liberation Sans&quot;,&quot;IPAGothic&quot;,&quot;Noto Sans CJK JP&quot;,sans-serif" fill="#111" textLength="5.8" lengthAdjust="spacingAndGlyphs" stroke="#111" stroke-width="0.4">0</text>
<text x="1390.9" y="459.0" font-size="14.5" font-family="&quot;Liberation Sans&quot;,&quot;IPAGothic&quot;,&quot;Noto Sans CJK JP&quot;,sans-serif" fill="#111" textLength="96.4" lengthAdjust="spacingAndGlyphs" stroke="#111" stroke-width="0.4">Object Analysis</text>
<text x="1461.5" y="485.7" font-size="14.5" font-family="&quot;Liberation Sans&quot;,&quot;IPAGothic&quot;,&quot;Noto Sans CJK JP&quot;,sans-serif" fill="#111" textLength="86.7" lengthAdjust="spacingAndGlyphs" stroke="#111" stroke-width="0.4">Deep Analysis</text>
<text x="1688.8" y="485.7" font-size="14.5" font-family="&quot;Liberation Sans&quot;,&quot;IPAGothic&quot;,&quot;Noto Sans CJK JP&quot;,sans-serif" fill="#111" textLength="114.3" lengthAdjust="spacingAndGlyphs" stroke="#111" stroke-width="0.4">Original - Modified</text>
<text x="1391.4" y="529.0" font-size="15" font-family="&quot;Liberation Sans&quot;,&quot;IPAGothic&quot;,&quot;Noto Sans CJK JP&quot;,sans-serif" fill="#111" textLength="30.9" lengthAdjust="spacingAndGlyphs" stroke="#111" stroke-width="0.4">変更:</text>
<text x="1751.6" y="529.0" font-size="15" font-family="&quot;Liberation Sans&quot;,&quot;IPAGothic&quot;,&quot;Noto Sans CJK JP&quot;,sans-serif" fill="#111" textLength="34.8" lengthAdjust="spacingAndGlyphs" stroke="#111" stroke-width="0.4">いいえ</text>
<text x="1391.4" y="549.2" font-size="15" font-family="&quot;Liberation Sans&quot;,&quot;IPAGothic&quot;,&quot;Noto Sans CJK JP&quot;,sans-serif" fill="#111" textLength="30.9" lengthAdjust="spacingAndGlyphs" stroke="#111" stroke-width="0.4">多様:</text>
<text x="1751.6" y="549.2" font-size="15" font-family="&quot;Liberation Sans&quot;,&quot;IPAGothic&quot;,&quot;Noto Sans CJK JP&quot;,sans-serif" fill="#2c8a2c" textLength="24.8" lengthAdjust="spacingAndGlyphs" stroke="#2c8a2c" stroke-width="0.4">はい</text>
<text x="1391.4" y="569.4" font-size="15" font-family="&quot;Liberation Sans&quot;,&quot;IPAGothic&quot;,&quot;Noto Sans CJK JP&quot;,sans-serif" fill="#111" textLength="112.1" lengthAdjust="spacingAndGlyphs" stroke="#111" stroke-width="0.4">交差した三角パッチ:</text>
<text x="1751.6" y="569.4" font-size="15" font-family="&quot;Liberation Sans&quot;,&quot;IPAGothic&quot;,&quot;Noto Sans CJK JP&quot;,sans-serif" fill="#111" textLength="45.7" lengthAdjust="spacingAndGlyphs" stroke="#111" stroke-width="0.4">未テスト</text>
<text x="1391.4" y="589.6" font-size="15" font-family="&quot;Liberation Sans&quot;,&quot;IPAGothic&quot;,&quot;Noto Sans CJK JP&quot;,sans-serif" fill="#111" textLength="30.9" lengthAdjust="spacingAndGlyphs" stroke="#111" stroke-width="0.4">法線:</text>
<text x="1751.6" y="589.6" font-size="15" font-family="&quot;Liberation Sans&quot;,&quot;IPAGothic&quot;,&quot;Noto Sans CJK JP&quot;,sans-serif" fill="#2c8a2c" textLength="49.9" lengthAdjust="spacingAndGlyphs" stroke="#2c8a2c" stroke-width="0.4">方向あり</text>
<text x="1391.4" y="609.8" font-size="15" font-family="&quot;Liberation Sans&quot;,&quot;IPAGothic&quot;,&quot;Noto Sans CJK JP&quot;,sans-serif" fill="#111" textLength="68.6" lengthAdjust="spacingAndGlyphs" stroke="#111" stroke-width="0.4">閉じたエッジ:</text>
<text x="1753.2" y="609.5" font-size="14" font-family="&quot;Liberation Sans&quot;,&quot;IPAGothic&quot;,&quot;Noto Sans CJK JP&quot;,sans-serif" fill="#111" textLength="5.5" lengthAdjust="spacingAndGlyphs" stroke="#111" stroke-width="0.4">0</text>
<text x="1391.4" y="630.0" font-size="15" font-family="&quot;Liberation Sans&quot;,&quot;IPAGothic&quot;,&quot;Noto Sans CJK JP&quot;,sans-serif" fill="#111" textLength="88.0" lengthAdjust="spacingAndGlyphs" stroke="#111" stroke-width="0.4">高集約のエッジ:</text>
<text x="1753.2" y="629.7" font-size="14" font-family="&quot;Liberation Sans&quot;,&quot;IPAGothic&quot;,&quot;Noto Sans CJK JP&quot;,sans-serif" fill="#111" textLength="5.5" lengthAdjust="spacingAndGlyphs" stroke="#111" stroke-width="0.4">0</text>
<text x="1391.4" y="650.2" font-size="15" font-family="&quot;Liberation Sans&quot;,&quot;IPAGothic&quot;,&quot;Noto Sans CJK JP&quot;,sans-serif" fill="#111" textLength="16.1" lengthAdjust="spacingAndGlyphs" stroke="#111" stroke-width="0.4">点:</text>
<text x="1753.2" y="649.9" font-size="14" font-family="&quot;Liberation Sans&quot;,&quot;IPAGothic&quot;,&quot;Noto Sans CJK JP&quot;,sans-serif" fill="#111" textLength="41.8" lengthAdjust="spacingAndGlyphs" stroke="#111" stroke-width="0.4">285017</text>
<text x="1391.4" y="670.4" font-size="15" font-family="&quot;Liberation Sans&quot;,&quot;IPAGothic&quot;,&quot;Noto Sans CJK JP&quot;,sans-serif" fill="#111" textLength="33.2" lengthAdjust="spacingAndGlyphs" stroke="#111" stroke-width="0.4">エッジ:</text>
<text x="1753.2" y="670.1" font-size="14" font-family="&quot;Liberation Sans&quot;,&quot;IPAGothic&quot;,&quot;Noto Sans CJK JP&quot;,sans-serif" fill="#111" textLength="41.8" lengthAdjust="spacingAndGlyphs" stroke="#111" stroke-width="0.4">855093</text>
<text x="1391.4" y="690.6" font-size="15" font-family="&quot;Liberation Sans&quot;,&quot;IPAGothic&quot;,&quot;Noto Sans CJK JP&quot;,sans-serif" fill="#111" textLength="42.9" lengthAdjust="spacingAndGlyphs" stroke="#111" stroke-width="0.4">フェース:</text>
<text x="1753.2" y="690.3" font-size="14" font-family="&quot;Liberation Sans&quot;,&quot;IPAGothic&quot;,&quot;Noto Sans CJK JP&quot;,sans-serif" fill="#111" textLength="41.8" lengthAdjust="spacingAndGlyphs" stroke="#111" stroke-width="0.4">570062</text>
<text x="1391.4" y="710.8" font-size="15" font-family="&quot;Liberation Sans&quot;,&quot;IPAGothic&quot;,&quot;Noto Sans CJK JP&quot;,sans-serif" fill="#111" textLength="34.2" lengthAdjust="spacingAndGlyphs" stroke="#111" stroke-width="0.4">シェル:</text>
<text x="1754.2" y="710.5" font-size="14" font-family="&quot;Liberation Sans&quot;,&quot;IPAGothic&quot;,&quot;Noto Sans CJK JP&quot;,sans-serif" fill="#111" textLength="4.0" lengthAdjust="spacingAndGlyphs" stroke="#111" stroke-width="0.4">1</text>
<text x="1413.8" y="765.9" font-size="14.5" font-family="&quot;Liberation Sans&quot;,&quot;IPAGothic&quot;,&quot;Noto Sans CJK JP&quot;,sans-serif" fill="#111" textLength="72.4" lengthAdjust="spacingAndGlyphs" stroke="#111" stroke-width="0.4">Cut Objects</text>
<text x="1395.7" y="792.3" font-size="14.5" font-family="&quot;Liberation Sans&quot;,&quot;IPAGothic&quot;,&quot;Noto Sans CJK JP&quot;,sans-serif" fill="#111" textLength="47.4" lengthAdjust="spacingAndGlyphs" stroke="#111" stroke-width="0.4">Position</text>
<text x="1395.1" y="822.4" font-size="14.5" font-family="&quot;Liberation Sans&quot;,&quot;IPAGothic&quot;,&quot;Noto Sans CJK JP&quot;,sans-serif" fill="#111" textLength="61.8" lengthAdjust="spacingAndGlyphs" stroke="#111" stroke-width="0.4">Inclination</text>
<text x="1395.7" y="852.9" font-size="14.5" font-family="&quot;Liberation Sans&quot;,&quot;IPAGothic&quot;,&quot;Noto Sans CJK JP&quot;,sans-serif" fill="#111" textLength="47.7" lengthAdjust="spacingAndGlyphs" stroke="#111" stroke-width="0.4">Azimuth</text>
<text x="7.6" y="951.6" font-size="15" font-family="&quot;Liberation Sans&quot;,&quot;IPAGothic&quot;,&quot;Noto Sans CJK JP&quot;,sans-serif" fill="#111" textLength="51.4" lengthAdjust="spacingAndGlyphs" stroke="#111" stroke-width="0.4">ログ表示:</text>
<text x="91.0" y="951.6" font-size="15" font-family="&quot;Liberation Sans&quot;,&quot;IPAGothic&quot;,&quot;Noto Sans CJK JP&quot;,sans-serif" fill="#111" textLength="42.0" lengthAdjust="spacingAndGlyphs" stroke="#111" stroke-width="0.4">コマンド</text>
<text x="176.0" y="951.6" font-size="15" font-family="&quot;Liberation Sans&quot;,&quot;IPAGothic&quot;,&quot;Noto Sans CJK JP&quot;,sans-serif" fill="#111" textLength="28.4" lengthAdjust="spacingAndGlyphs" stroke="#111" stroke-width="0.4">情報</text>
<text x="248.0" y="951.6" font-size="15" font-family="&quot;Liberation Sans&quot;,&quot;IPAGothic&quot;,&quot;Noto Sans CJK JP&quot;,sans-serif" fill="#111" textLength="27.0" lengthAdjust="spacingAndGlyphs" stroke="#111" stroke-width="0.4">警告</text>
<text x="318.4" y="951.6" font-size="15" font-family="&quot;Liberation Sans&quot;,&quot;IPAGothic&quot;,&quot;Noto Sans CJK JP&quot;,sans-serif" fill="#111" textLength="32.0" lengthAdjust="spacingAndGlyphs" stroke="#111" stroke-width="0.4">エラー</text>
<text x="394.4" y="951.6" font-size="15" font-family="&quot;Liberation Sans&quot;,&quot;IPAGothic&quot;,&quot;Noto Sans CJK JP&quot;,sans-serif" fill="#111" textLength="26.0" lengthAdjust="spacingAndGlyphs" stroke="#111" stroke-width="0.4">ACK</text>
<text x="463.6" y="951.6" font-size="15" font-family="&quot;Liberation Sans&quot;,&quot;IPAGothic&quot;,&quot;Noto Sans CJK JP&quot;,sans-serif" fill="#111" textLength="86.4" lengthAdjust="spacingAndGlyphs" stroke="#111" stroke-width="0.4">オートスクロール</text>
<text x="599.0" y="951.6" font-size="15" font-family="&quot;Liberation Sans&quot;,&quot;IPAGothic&quot;,&quot;Noto Sans CJK JP&quot;,sans-serif" fill="#111" textLength="59.4" lengthAdjust="spacingAndGlyphs" stroke="#111" stroke-width="0.4">ログをクリア</text>
<text x="703.0" y="951.6" font-size="15" font-family="&quot;Liberation Sans&quot;,&quot;IPAGothic&quot;,&quot;Noto Sans CJK JP&quot;,sans-serif" fill="#111" textLength="28.0" lengthAdjust="spacingAndGlyphs" stroke="#111" stroke-width="0.4">実行</text>
<text x="8.0" y="974.4" font-size="14.6" font-family="&quot;Liberation Mono&quot;,&quot;IPAGothic&quot;,monospace" fill="#e2fdff" textLength="104.0" lengthAdjust="spacingAndGlyphs">09:48:50.087</text>
<text x="129.6" y="972.6" font-size="15" font-family="&quot;Liberation Sans&quot;,&quot;IPAGothic&quot;,&quot;Noto Sans CJK JP&quot;,sans-serif" fill="#1c1c8c" textLength="71.4" lengthAdjust="spacingAndGlyphs" stroke="#1c1c8c" stroke-width="0.4">分析終了.</text>
<text x="5.0" y="1016.4" font-size="15" font-family="&quot;Liberation Sans&quot;,&quot;Noto Sans CJK JP&quot;,sans-serif" fill="#111" textLength="56.0" lengthAdjust="spacingAndGlyphs" stroke="#111" stroke-width="0.28">通信切断</text>
<text x="72.0" y="1016.4" font-size="15" font-family="&quot;Liberation Sans&quot;,&quot;Noto Sans CJK JP&quot;,sans-serif" fill="#111" textLength="3.6" lengthAdjust="spacingAndGlyphs" stroke="#111" stroke-width="0.28">-</text>
<text x="95.0" y="1016.4" font-size="15" font-family="&quot;Liberation Sans&quot;,&quot;Noto Sans CJK JP&quot;,sans-serif" fill="#111" textLength="41.0" lengthAdjust="spacingAndGlyphs" stroke="#111" stroke-width="0.28">待機中</text>
<text x="403.0" y="1016.0" font-size="15" font-family="&quot;Liberation Sans&quot;,&quot;Noto Sans CJK JP&quot;,sans-serif" fill="#111" textLength="63.4" lengthAdjust="spacingAndGlyphs" stroke="#111" stroke-width="0.28">1769 FPS</text>
<text x="925.6" y="248.4" font-size="35" font-family="&quot;Noto Sans CJK JP&quot;,&quot;Liberation Sans&quot;,sans-serif" fill="#111" font-weight="300" textLength="392.8" lengthAdjust="spacingAndGlyphs">オブジェクトの配置完了</text>
<text x="75.2" y="815.6" font-size="27" textLength="9.2" lengthAdjust="spacingAndGlyphs" font-weight="700" font-style="italic" font-family="&quot;Liberation Sans&quot;,&quot;Noto Sans CJK JP&quot;,sans-serif" fill="#15159a">z</text>
<text x="38.4" y="821.4" font-size="16" textLength="9.6" lengthAdjust="spacingAndGlyphs" font-weight="700" font-family="&quot;Liberation Sans&quot;,&quot;Noto Sans CJK JP&quot;,sans-serif" fill="#17702a" stroke="#17702a" stroke-width="0.3" transform="rotate(-16 43 815.6)">Y</text>
<text x="114.6" y="825" font-size="21" textLength="9.6" lengthAdjust="spacingAndGlyphs" font-weight="700" font-family="&quot;Liberation Sans&quot;,&quot;Noto Sans CJK JP&quot;,sans-serif" fill="#b41c2c" stroke="#b41c2c" stroke-width="0.2" transform="rotate(20 119.3 819)">x</text>
</g>
</svg>
</div>
</body></html>
